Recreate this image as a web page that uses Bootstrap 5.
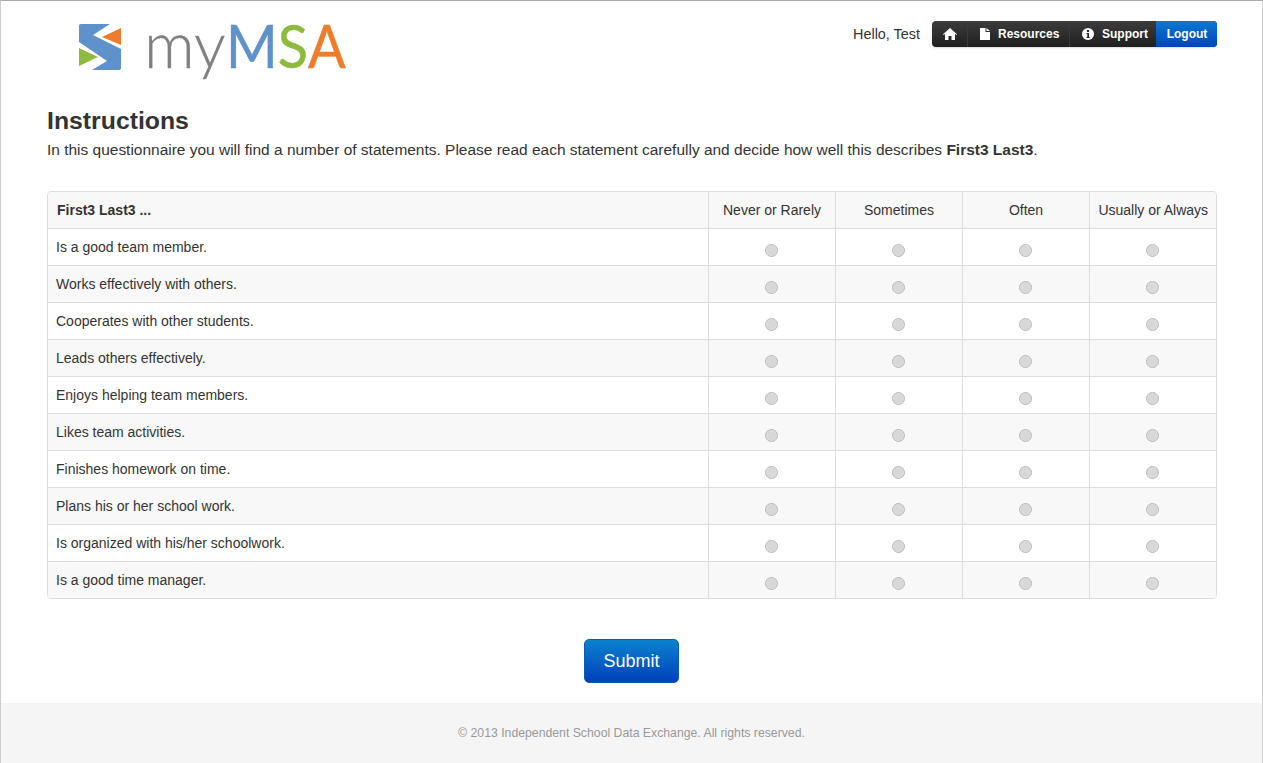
<!DOCTYPE html>
<html lang="en">
<head>
<meta charset="utf-8">
<title>myMSA</title>
<link rel="stylesheet" href="https://cdn.jsdelivr.net/npm/bootstrap@5.3.0/dist/css/bootstrap.min.css">
<style>
html, body { height: 100%; }
body { font-family: "Liberation Sans", Arial, sans-serif; font-size: 14px; line-height: 20px; color: #333; background: #fff; }
.page-frame { height: 763px; border: 1px solid #ccc; border-top-color: #aaa; border-bottom: 0; display: flex; flex-direction: column; overflow: hidden; }
.page-main { flex: 1 1 auto; padding: 0 45px 0 46px; }
.top-strip { height: 90px; }
.brand-mark { margin: 3px 0 0 32px; display: block; }
.logo-word { font-family: "Lato", sans-serif; font-size: 60px; font-weight: 400; stroke-width: .5; }
.logo-small { font-family: "Lato", sans-serif; font-size: 63px; font-weight: 300; stroke: #808080; stroke-width: .3; }
.hello-text { font-size: 14.4px; color: #333; margin-right: 12px; }
.top-menu { margin-top: 20px; }
.menu-group { height: 26px; border-radius: 4px; overflow: hidden; box-shadow: 0 1px 2px rgba(0,0,0,.15); background: linear-gradient(#3c3c3c, #1f1f1f); }
.menu-link { display: flex; align-items: center; gap: 8px; height: 26px; color: #fff; font-size: 12px; font-weight: 700; white-space: nowrap; text-decoration: none; padding: 0 0 0 12px; border-right: 1px solid #3a3a3a; }
.menu-link svg { flex: 0 0 auto; }
.menu-link.menu-home { padding: 0; width: 36px; justify-content: center; }
.menu-link.menu-res { width: 102px; }
.menu-link.menu-sup { width: 86px; border-right: 0; }
.menu-link.menu-out { width: 61px; justify-content: center; padding: 0 0 0 1px; border-right: 0; background: linear-gradient(#0a7ad0, #0044bb); }
.intro-title { font-size: 24.8px; line-height: 30px; font-weight: 700; margin: 15px 0 0; color: #333; }
.intro-text { font-size: 15.47px; line-height: 20px; margin: 4px 0 31px; color: #333; }
.survey-wrap { border: 1px solid #ddd; border-radius: 4px; overflow: hidden; }
.survey-grid { margin: 0; width: 100%; table-layout: fixed; border-collapse: collapse; }
.survey-grid th, .survey-grid td { height: 37px; padding: 0 8px; font-size: 14px; font-weight: 400; color: #333; border: 0; border-top: 1px solid #ddd; border-left: 1px solid #ddd; vertical-align: middle; background: transparent; box-shadow: none; }
.survey-grid tr:first-child th { border-top: 0; height: 36px; padding-top: 1px; }
.survey-grid th:first-child, .survey-grid td:first-child { border-left: 0; }
.survey-grid th.col-statement { font-weight: 700; padding-left: 9px; }
.survey-grid thead th, .survey-grid tbody tr:nth-child(even) td { background: #f8f8f8; }
.survey-grid th.choice-head { width: 127px; text-align: center; padding: 1px 0 0 1px; }
.survey-grid .choice-cell { text-align: center; padding: 5px 1px 0 0; }
.fake-radio { display: inline-block; width: 13px; height: 13px; margin: 0; vertical-align: middle; border-radius: 50%; appearance: none; background: radial-gradient(circle, #d8d8d8 55%, #e6e6e6 80%); border: 1px solid #b8b8b8; }
.submit-row { margin-top: 40px; height: 44px; }
.submit-btn { width: 95px; height: 44px; padding: 0; margin-right: 1px; font-size: 18px; color: #fff; border: 1px solid #0a5fb4; border-radius: 5px; background: linear-gradient(#0a82cd, #0040bb); }
.page-foot { flex: 0 0 60px; margin-top: 20px; background: #f5f5f5; color: #999; font-size: 12.25px; line-height: 60px; text-align: center; }
</style>
</head>
<body>
<div class="page-frame">
  <div class="page-main">
    <div class="top-strip d-flex justify-content-between align-items-start">
      <svg class="brand-mark" width="272" height="86" viewBox="0 -20 272 86" role="img" aria-label="myMSA">
        <path d="M2 0H31L14 11 42 25V44q0 2-2 2H13L28 37 0 18V2q0-2 2-2z" fill="#5f92cb"/>
        <path d="M42 4V21L23 13z" fill="#ee7d2b"/>
        <path d="M0 24V42L19 33z" fill="#8dbb3e"/>
        <text class="logo-small" x="65" y="44" fill="#808080">my</text>
        <text class="logo-word" transform="translate(147 44) scale(.93 1)"><tspan fill="#5f92cb" stroke="#5f92cb">M</tspan><tspan fill="#8dbb3e" stroke="#8dbb3e">S</tspan><tspan fill="#ee7d2b" stroke="#ee7d2b">A</tspan></text>
      </svg>
      <div class="top-menu d-flex align-items-center">
        <span class="hello-text">Hello, Test</span>
        <nav class="menu-group d-flex">
          <a class="menu-link menu-home" href="#" aria-label="Home">
            <svg width="14" height="12" viewBox="0 0 14 12"><path fill="#fff" d="M7 0l7 6.200-.8.9L12 6v6H8.500V8h-3v4H2V6L.8 7.100 0 6.200z"/></svg>
          </a>
          <a class="menu-link menu-res" href="#">
            <svg width="10" height="12" viewBox="0 0 10 12"><path fill="#fff" d="M0 0h5.500v4H10v8H0zM6.500 0L10 3H6.500z"/></svg>
            Resources
          </a>
          <a class="menu-link menu-sup" href="#">
            <svg width="12" height="12" viewBox="0 0 12 12"><circle cx="6" cy="6" r="6" fill="#fff"/><rect x="5" y="2" width="2" height="2" fill="#222"/><path d="M4.500 5h2.500v4h.7v1H4.500V9h.8V6h-.8z" fill="#222"/></svg>
            Support
          </a>
          <a class="menu-link menu-out" href="#">Logout</a>
        </nav>
      </div>
    </div>
    <h1 class="intro-title">Instructions</h1>
    <p class="intro-text">In this questionnaire you will find a number of statements. Please read each statement carefully and decide how well this describes <strong>First3 Last3</strong>.</p>
    <div class="survey-wrap">
      <table class="survey-grid">
        <thead>
          <tr>
            <th class="col-statement">First3 Last3 ...</th>
            <th class="choice-head">Never or Rarely</th>
            <th class="choice-head">Sometimes</th>
            <th class="choice-head">Often</th>
            <th class="choice-head">Usually or Always</th>
          </tr>
        </thead>
        <tbody>
          <tr><td>Is a good team member.</td><td class="choice-cell"><input class="fake-radio" type="radio" name="q1"></td><td class="choice-cell"><input class="fake-radio" type="radio" name="q1"></td><td class="choice-cell"><input class="fake-radio" type="radio" name="q1"></td><td class="choice-cell"><input class="fake-radio" type="radio" name="q1"></td></tr>
          <tr><td>Works effectively with others.</td><td class="choice-cell"><input class="fake-radio" type="radio" name="q2"></td><td class="choice-cell"><input class="fake-radio" type="radio" name="q2"></td><td class="choice-cell"><input class="fake-radio" type="radio" name="q2"></td><td class="choice-cell"><input class="fake-radio" type="radio" name="q2"></td></tr>
          <tr><td>Cooperates with other students.</td><td class="choice-cell"><input class="fake-radio" type="radio" name="q3"></td><td class="choice-cell"><input class="fake-radio" type="radio" name="q3"></td><td class="choice-cell"><input class="fake-radio" type="radio" name="q3"></td><td class="choice-cell"><input class="fake-radio" type="radio" name="q3"></td></tr>
          <tr><td>Leads others effectively.</td><td class="choice-cell"><input class="fake-radio" type="radio" name="q4"></td><td class="choice-cell"><input class="fake-radio" type="radio" name="q4"></td><td class="choice-cell"><input class="fake-radio" type="radio" name="q4"></td><td class="choice-cell"><input class="fake-radio" type="radio" name="q4"></td></tr>
          <tr><td>Enjoys helping team members.</td><td class="choice-cell"><input class="fake-radio" type="radio" name="q5"></td><td class="choice-cell"><input class="fake-radio" type="radio" name="q5"></td><td class="choice-cell"><input class="fake-radio" type="radio" name="q5"></td><td class="choice-cell"><input class="fake-radio" type="radio" name="q5"></td></tr>
          <tr><td>Likes team activities.</td><td class="choice-cell"><input class="fake-radio" type="radio" name="q6"></td><td class="choice-cell"><input class="fake-radio" type="radio" name="q6"></td><td class="choice-cell"><input class="fake-radio" type="radio" name="q6"></td><td class="choice-cell"><input class="fake-radio" type="radio" name="q6"></td></tr>
          <tr><td>Finishes homework on time.</td><td class="choice-cell"><input class="fake-radio" type="radio" name="q7"></td><td class="choice-cell"><input class="fake-radio" type="radio" name="q7"></td><td class="choice-cell"><input class="fake-radio" type="radio" name="q7"></td><td class="choice-cell"><input class="fake-radio" type="radio" name="q7"></td></tr>
          <tr><td>Plans his or her school work.</td><td class="choice-cell"><input class="fake-radio" type="radio" name="q8"></td><td class="choice-cell"><input class="fake-radio" type="radio" name="q8"></td><td class="choice-cell"><input class="fake-radio" type="radio" name="q8"></td><td class="choice-cell"><input class="fake-radio" type="radio" name="q8"></td></tr>
          <tr><td>Is organized with his/her schoolwork.</td><td class="choice-cell"><input class="fake-radio" type="radio" name="q9"></td><td class="choice-cell"><input class="fake-radio" type="radio" name="q9"></td><td class="choice-cell"><input class="fake-radio" type="radio" name="q9"></td><td class="choice-cell"><input class="fake-radio" type="radio" name="q9"></td></tr>
          <tr><td>Is a good time manager.</td><td class="choice-cell"><input class="fake-radio" type="radio" name="q10"></td><td class="choice-cell"><input class="fake-radio" type="radio" name="q10"></td><td class="choice-cell"><input class="fake-radio" type="radio" name="q10"></td><td class="choice-cell"><input class="fake-radio" type="radio" name="q10"></td></tr>
        </tbody>
      </table>
    </div>
    <div class="submit-row text-center">
      <button class="btn submit-btn" type="button">Submit</button>
    </div>
  </div>
  <footer class="page-foot">© 2013 Independent School Data Exchange. All rights reserved.</footer>
</div>
<script src="https://cdn.jsdelivr.net/npm/bootstrap@5.3.0/dist/js/bootstrap.bundle.min.js"></script>
</body>
</html>
